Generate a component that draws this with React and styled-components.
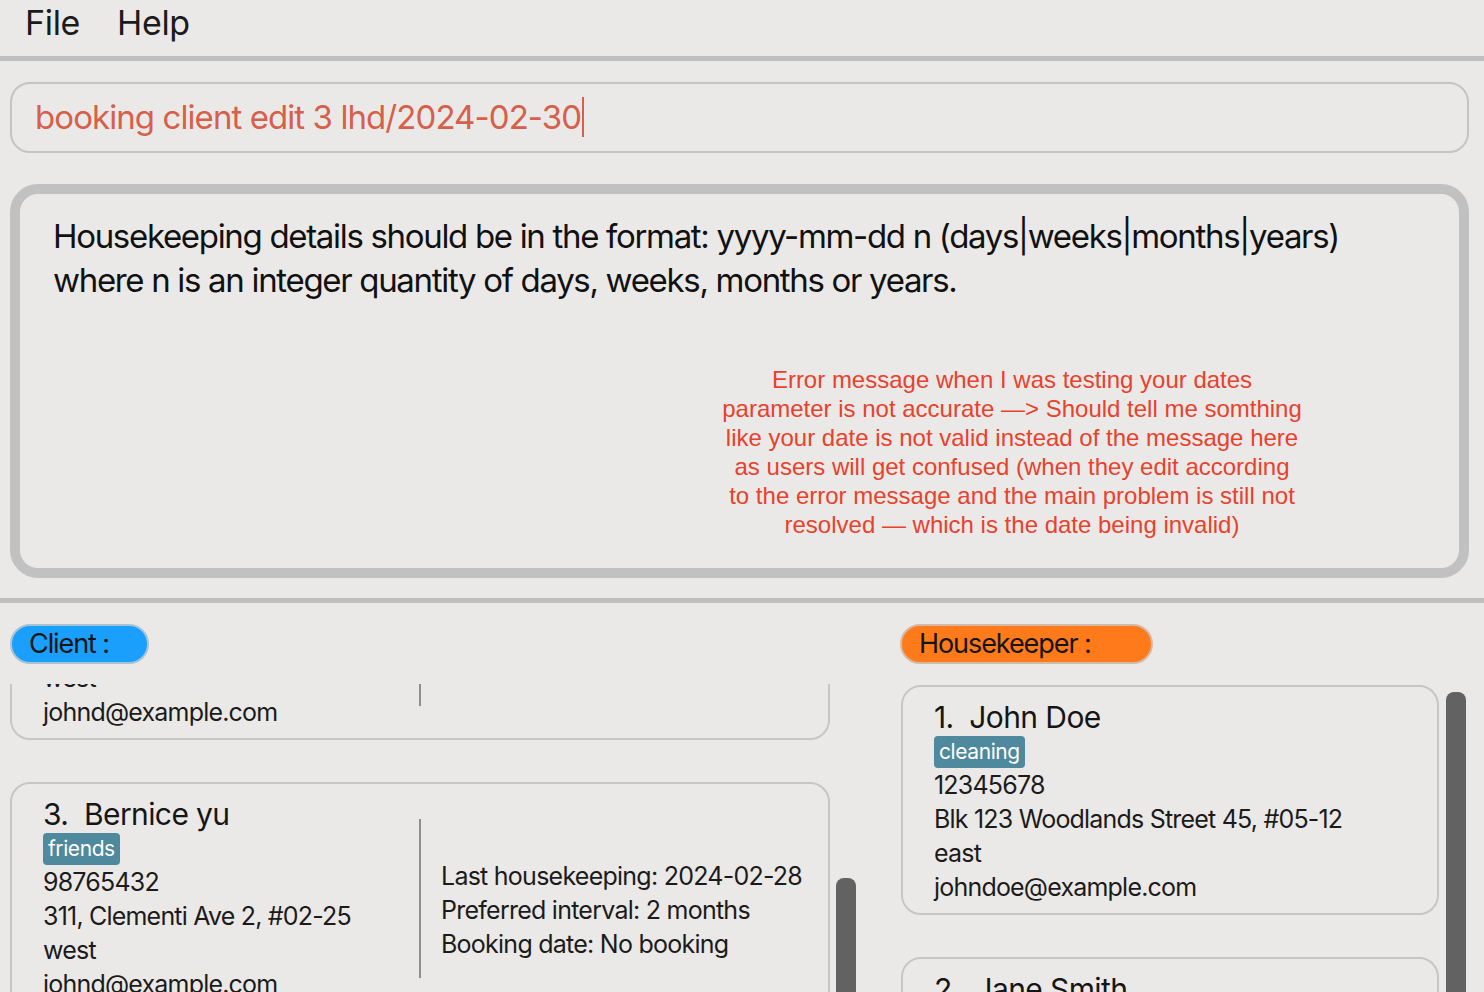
import React, { useLayoutEffect, useRef } from "react";
import styled, { createGlobalStyle } from "styled-components";

const GlobalStyle = createGlobalStyle`
  html, body {
    margin: 0;
    padding: 0;
    background: #ebe9e7;
  }
  body {
    font-family: Inter, "Noto Sans", sans-serif;
    color: #1b1b1b;
  }
`;

const Window = styled.div`
  width: 1484px;
  height: 992px;
  overflow: hidden;
  display: flex;
  flex-direction: column;
  background: #ebe9e7;
`;

const MenuBar = styled.div`
  height: 61px;
  flex: none;
  display: flex;
  align-items: center;
  gap: 37px;
  padding: 0 0 10px 25px;
  box-sizing: border-box;
  border-bottom: 5px solid #bfbfbf;
  font-size: 34px;
  letter-spacing: -0.01em;
`;

const MenuItem = styled.span`
  line-height: 1;
`;

const CommandSection = styled.div`
  padding: 21px 15px 0 10px;
`;

const CommandBox = styled.div`
  height: 71px;
  box-sizing: border-box;
  border: 2px solid #c4c4c4;
  border-radius: 20px;
  display: flex;
  align-items: center;
  padding: 0 0 2px 23px;
  font-size: 33px;
  letter-spacing: -0.028em;
  color: #d5604b;
  white-space: pre;
`;

const Caret = styled.span`
  display: inline-block;
  width: 2px;
  height: 40px;
  background: #d5604b;
  margin-left: 1px;
`;

const ResultBox = styled.div`
  position: relative;
  margin: 31px 15px 0 10px;
  height: 394px;
  flex: none;
  box-sizing: border-box;
  border: 10px solid #c1c1c1;
  border-radius: 28px;
  padding: 20px 10px 0 33px;
  font-size: 33px;
  line-height: 44px;
  letter-spacing: -0.04em;
  color: #111;
  white-space: nowrap;
`;

const Annotation = styled.div`
  position: absolute;
  left: 682px;
  top: 171px;
  width: 620px;
  text-align: center;
  font-family: "Liberation Sans", Arial, sans-serif;
  font-size: 24px;
  line-height: 29px;
  letter-spacing: 0;
  color: #e8412c;
`;

const Divider = styled.div`
  margin-top: 20px;
  height: 5px;
  flex: none;
  background: #bfbfbf;
`;

const Lists = styled.div`
  flex: 1;
  min-height: 0;
  display: flex;
  gap: 44px;
  padding: 21px 18px 0 10px;
`;

const Panel = styled.div`
  width: ${(p) => p.$width}px;
  display: flex;
  flex-direction: column;
  min-height: 0;
`;

const Badge = styled.div`
  align-self: flex-start;
  width: ${(p) => p.$width}px;
  height: 40px;
  box-sizing: border-box;
  border-radius: 20px;
  border: 2px solid ${(p) => p.$edge};
  background: ${(p) => p.$bg};
  font-size: 27px;
  line-height: 36px;
  letter-spacing: -0.04em;
  padding-left: 17px;
  color: #151515;
`;

const ListArea = styled.div`
  flex: 1;
  min-height: 0;
  margin-top: 20px;
  display: flex;
  gap: ${(p) => p.$gap}px;
`;

const Viewport = styled.div`
  flex: 1;
  min-width: 0;
  overflow: hidden;
  padding-top: ${(p) => p.$top || 0}px;
  padding-left: ${(p) => p.$left || 0}px;
`;

const CardList = styled.div`
  display: flex;
  flex-direction: column;
  gap: 42px;
`;

const Track = styled.div`
  width: 20px;
  flex: none;
`;

const Thumb = styled.div`
  margin-top: ${(p) => p.$offset}px;
  height: ${(p) => p.$size}px;
  border-radius: 8px;
  background: #626262;
`;

const Card = styled.div`
  border: 2px solid #c7c6c4;
  border-radius: 20px;
  display: flex;
  padding: 12px 0 9px 31px;
`;

const Main = styled.div`
  width: ${(p) => (p.$width ? `${p.$width}px` : "auto")};
  flex: ${(p) => (p.$width ? "none" : 1)};
  padding-right: ${(p) => (p.$width ? 12 : 0)}px;
  box-sizing: border-box;
`;

const Name = styled.div`
  font-size: 30px;
  line-height: 36px;
  letter-spacing: -0.02em;
  white-space: pre;
  color: #151515;
`;

const Tag = styled.span`
  display: inline-block;
  margin-top: 1px;
  height: 32px;
  padding: 0 5px;
  border-radius: 4px;
  background: #4f899d;
  color: #fff;
  font-size: 21px;
  line-height: 31px;
  letter-spacing: -0.02em;
`;

const Lines = styled.div`
  font-size: 25px;
  line-height: 34px;
  letter-spacing: -0.032em;
  color: #1b1b1b;
`;

const Rule = styled.div`
  width: 2px;
  flex: none;
  margin: 23px 0;
  background: #8e8e8e;
`;

const Booking = styled.div`
  flex: 1;
  display: flex;
  flex-direction: column;
  justify-content: center;
  padding: 22px 0 0 20px;
  font-size: 25px;
  line-height: 34px;
  letter-spacing: -0.03em;
  white-space: nowrap;
`;

const clients = [
  {
    id: 1,
    name: "Alex Yeoh",
    tag: "friends",
    phone: "87438807",
    address: "Blk 30 Geylang Street 29, #06-40",
    area: "west",
    email: "alexyeoh@example.com",
    last: "2024-01-15",
    interval: "1 months",
    booking: "No booking",
  },
  {
    id: 2,
    name: "John Doe",
    tag: "friends",
    phone: "99272758",
    address: "Blk 30 Lorong 3 Serangoon Gardens, #07-18, Singapore",
    area: "west",
    email: "johnd@example.com",
    last: "2024-02-01",
    interval: "2 weeks",
    booking: "No booking",
  },
  {
    id: 3,
    name: "Bernice yu",
    tag: "friends",
    phone: "98765432",
    address: "311, Clementi Ave 2, #02-25",
    area: "west",
    email: "johnd@example.com",
    last: "2024-02-28",
    interval: "2 months",
    booking: "No booking",
  },
];

const housekeepers = [
  {
    id: 1,
    name: "John Doe",
    tag: "cleaning",
    phone: "12345678",
    address: "Blk 123 Woodlands Street 45, #05-12",
    area: "east",
    email: "johndoe@example.com",
  },
  {
    id: 2,
    name: "Jane Smith",
    tag: "cleaning",
    phone: "87654321",
    address: "Blk 456 Tampines Street 12, #08-30",
    area: "east",
    email: "janesmith@example.com",
  },
];

const ClientCard = ({ person, cardRef }) => (
  <Card ref={cardRef}>
    <Main $width={376}>
      <Name>{`${person.id}.  ${person.name}`}</Name>
      <Tag>{person.tag}</Tag>
      <Lines>
        <div>{person.phone}</div>
        <div>{person.address}</div>
        <div>{person.area}</div>
        <div>{person.email}</div>
      </Lines>
    </Main>
    <Rule />
    <Booking>
      <div>Last housekeeping: {person.last}</div>
      <div>Preferred interval: {person.interval}</div>
      <div>Booking date: {person.booking}</div>
    </Booking>
  </Card>
);

const KeeperCard = ({ person }) => (
  <Card>
    <Main>
      <Name>{`${person.id}.  ${person.name}`}</Name>
      <Tag>{person.tag}</Tag>
      <Lines>
        <div>{person.phone}</div>
        <div>{person.address}</div>
        <div>{person.area}</div>
        <div>{person.email}</div>
      </Lines>
    </Main>
  </Card>
);

const App = () => {
  const clientView = useRef(null);
  const secondCard = useRef(null);

  // scroll so only the tail of the second client card shows
  useLayoutEffect(() => {
    const view = clientView.current;
    const card = secondCard.current;
    if (view && card) {
      view.scrollTop = card.offsetTop + card.offsetHeight - view.offsetTop - 56;
    }
  }, []);

  return (
    <Window>
      <GlobalStyle />
      <MenuBar>
        <MenuItem>File</MenuItem>
        <MenuItem>Help</MenuItem>
      </MenuBar>
      <CommandSection>
        <CommandBox>
          booking client edit 3 lhd/2024-02-30
          <Caret />
        </CommandBox>
      </CommandSection>
      <ResultBox>
        Housekeeping details should be in the format: yyyy-mm-dd n (days|weeks|months|years)
        <br />
        where n is an integer quantity of days, weeks, months or years.
        <Annotation>
          Error message when I was testing your dates
          <br />
          parameter is not accurate —&gt; Should tell me somthing
          <br />
          like your date is not valid instead of the message here
          <br />
          as users will get confused (when they edit according
          <br />
          to the error message and the main problem is still not
          <br />
          resolved — which is the date being invalid)
        </Annotation>
      </ResultBox>
      <Divider />
      <Lists>
        <Panel $width={846}>
          <Badge $width={139} $bg="#1a9ffd" $edge="#a9c3d6">
            Client :
          </Badge>
          <ListArea $gap={6}>
            <Viewport ref={clientView}>
              <CardList>
                {clients.map((c) => (
                  <ClientCard
                    key={c.id}
                    person={c}
                    cardRef={c.id === 2 ? secondCard : undefined}
                  />
                ))}
              </CardList>
            </Viewport>
            <Track>
              <Thumb $offset={194} $size={240} />
            </Track>
          </ListArea>
        </Panel>
        <Panel $width={566}>
          <Badge $width={253} $bg="#fe7a1b" $edge="#d6b9a4">
            Housekeeper :
          </Badge>
          <ListArea $gap={7}>
            <Viewport $top={1} $left={1}>
              <CardList>
                {housekeepers.map((h) => (
                  <KeeperCard key={h.id} person={h} />
                ))}
              </CardList>
            </Viewport>
            <Track>
              <Thumb $offset={8} $size={400} />
            </Track>
          </ListArea>
        </Panel>
      </Lists>
    </Window>
  );
};

export default App;
